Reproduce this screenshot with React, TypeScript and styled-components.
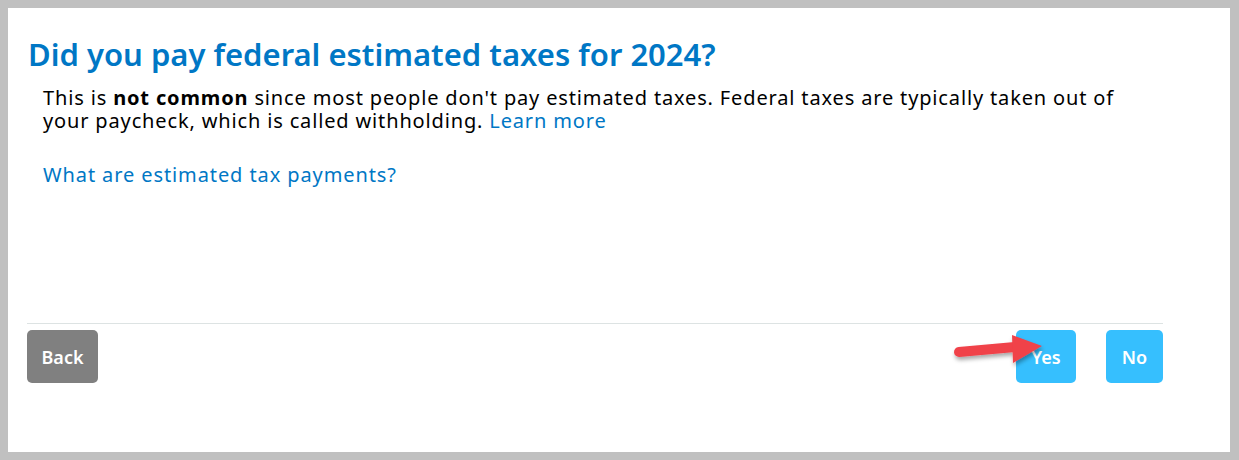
import React from 'react';
import styled, {createGlobalStyle} from 'styled-components';

const GlobalStyle = createGlobalStyle`
  html, body {
    margin: 0;
    padding: 0;
    background: #c0c0c0;
  }
  body {
    font-family: "Noto Sans", "Liberation Sans", sans-serif;
  }
`;

const Frame = styled.div`
  position: relative;
  box-sizing: border-box;
  margin: 8px 9px 8px 8px;
  height: 444px;
  background: #fff;
  display: flex;
  flex-direction: column;
  padding: 0 67px 69px 20px;
`;

const Content = styled.div`
  flex: 1;
`;

const Heading = styled.h1`
  margin: 26px 0 0;
  font-size: 31px;
  line-height: 40px;
  font-weight: 600;
  color: #0077c5;
  letter-spacing: 0;
`;

const Text = styled.p`
  margin: 12px 30px 0 15px;
  font-size: 20px;
  line-height: 23px;
  letter-spacing: 0.85px;
  color: #000;

  b {
    font-weight: 700;
  }
`;

const Link = styled.a`
  color: #0077c5;
  text-decoration: none;
`;

const LinkRow = styled.div`
  margin: 30px 0 0 15px;
  font-size: 20px;
  line-height: 26px;
  letter-spacing: 0.9px;
`;

const Footer = styled.div`
  border-top: 1px solid #dde3e3;
  margin-left: -1px;
  padding-top: 6px;
  display: flex;
  align-items: center;
`;

const Button = styled.button<{$tone: 'grey' | 'blue'; $w: number}>`
  width: ${p => p.$w}px;
  height: 53px;
  border: none;
  border-radius: 5px;
  padding: 0;
  font-family: "Noto Sans", "Liberation Sans", sans-serif;
  font-size: 18px;
  font-weight: 600;
  color: #fff;
  background: ${p => (p.$tone === 'grey' ? '#808080' : '#36bffe')};
  cursor: pointer;
`;

const Spacer = styled.div`
  flex: 1;
`;

const Gap = styled.div`
  width: 30px;
`;

const Arrow = styled.svg`
  position: absolute;
  left: 937px;
  top: 317px;
  overflow: visible;
`;

const App = () => (
  <>
    <GlobalStyle />
    <Frame>
      <Content>
        <Heading>Did you pay federal estimated taxes for 2024?</Heading>
        <Text>
          This is <b>not common</b> since most people don't pay estimated taxes.
          Federal taxes are typically taken out of your paycheck, which is called
          withholding. <Link href="#">Learn more</Link>
        </Text>
        <LinkRow>
          <Link href="#">What are estimated tax payments?</Link>
        </LinkRow>
      </Content>
      <Footer>
        <Button $tone="grey" $w={71}>Back</Button>
        <Spacer />
        <Button $tone="blue" $w={60}>Yes</Button>
        <Gap />
        <Button $tone="blue" $w={57}>No</Button>
      </Footer>
      <Arrow width="110" height="50" viewBox="0 0 110 50">
        <defs>
          <filter id="sh" x="-20%" y="-40%" width="140%" height="180%">
            <feDropShadow dx="1" dy="3" stdDeviation="2" floodColor="#000" floodOpacity="0.35" />
          </filter>
        </defs>
        <g filter="url(#sh)">
          <line x1="14" y1="27" x2="70" y2="22" stroke="#f0424a" strokeWidth="10" strokeLinecap="round" />
          <polygon points="67,10 97,21 68,38" fill="#f0424a" />
        </g>
      </Arrow>
    </Frame>
  </>
);

export default App;
